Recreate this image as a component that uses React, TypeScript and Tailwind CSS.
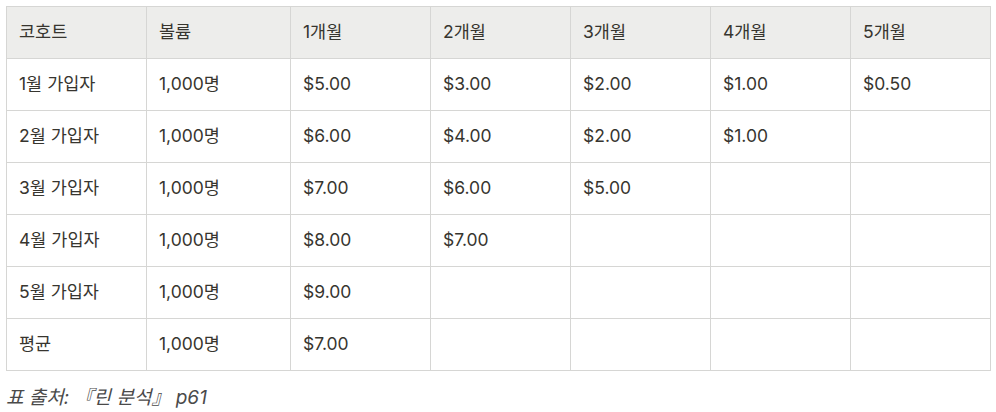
const header = ['코호트', '볼륨', '1개월', '2개월', '3개월', '4개월', '5개월']

const rows = [
  ['1월 가입자', '1,000명', '$5.00', '$3.00', '$2.00', '$1.00', '$0.50'],
  ['2월 가입자', '1,000명', '$6.00', '$4.00', '$2.00', '$1.00', ''],
  ['3월 가입자', '1,000명', '$7.00', '$6.00', '$5.00', '', ''],
  ['4월 가입자', '1,000명', '$8.00', '$7.00', '', '', ''],
  ['5월 가입자', '1,000명', '$9.00', '', '', '', ''],
  ['평균', '1,000명', '$7.00', '', '', '', ''],
]

const widths = ['w-[140px]', 'w-[144px]', 'w-[140px]', 'w-[140px]', 'w-[140px]', 'w-[140px]', 'w-[140px]']

export default function App() {
  return (
    <div
      className="bg-white px-[6px] pt-[6px] text-[#37352f]"
      style={{ fontFamily: 'Inter, "Noto Sans CJK KR", sans-serif' }}
    >
      <table className="table-fixed border-collapse text-[17.5px] w-[985px]">
        <thead>
          <tr className="bg-[#ededeb] h-[52px]">
            {header.map((h, i) => (
              <th
                key={i}
                className={`${widths[i]} border border-[#d6d6d4] px-3 text-left font-normal`}
              >
                {h}
              </th>
            ))}
          </tr>
        </thead>
        <tbody>
          {rows.map((row, r) => (
            <tr key={r} className="h-[52px]">
              {row.map((c, i) => (
                <td key={i} className="border border-[#d6d6d4] px-3">
                  {c}
                </td>
              ))}
            </tr>
          ))}
        </tbody>
      </table>
      <p className="mt-[13px] text-[19px] italic text-[#4a4a4a]">표 출처: 『린 분석』 p61</p>
    </div>
  )
}
